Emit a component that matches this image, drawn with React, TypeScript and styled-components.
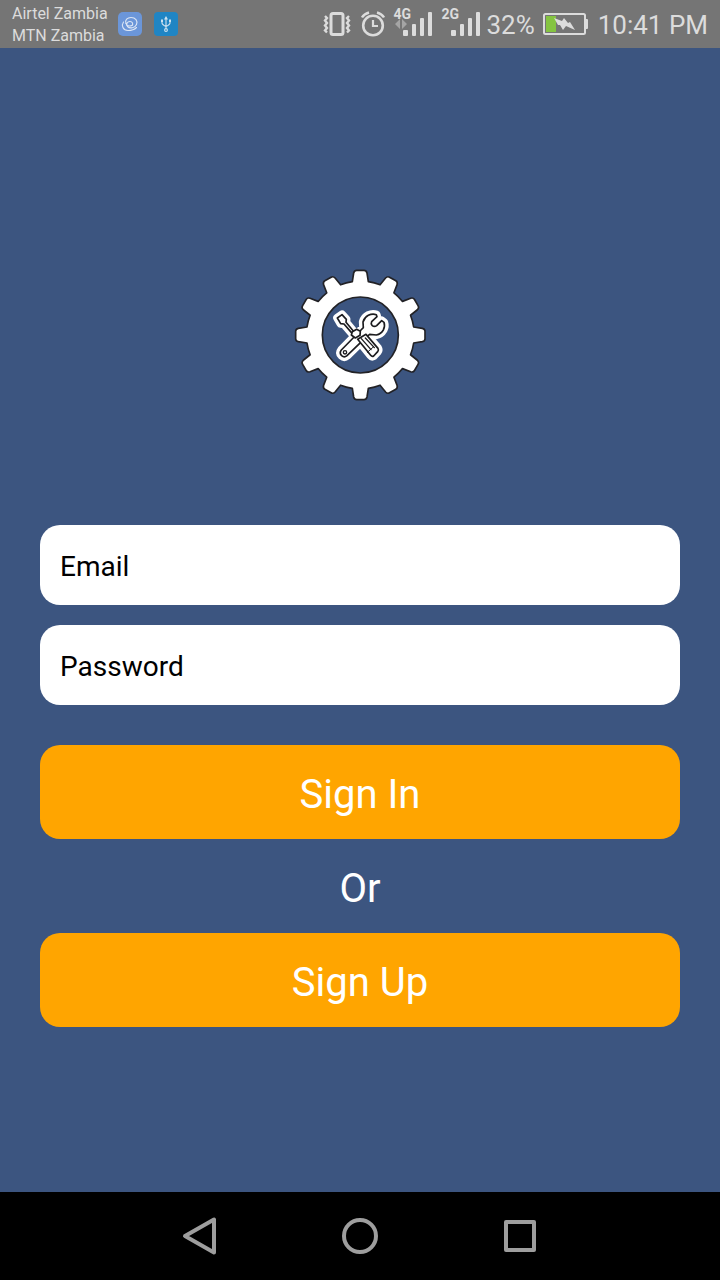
import React from "react";
import styled, { createGlobalStyle } from "styled-components";

const GlobalStyle = createGlobalStyle`
  *, *::before, *::after { box-sizing: border-box; }
  body { margin: 0; background: #3c5580; }
  body, button, input { font-family: Roboto, "Noto Sans", sans-serif; }
`;

const Screen = styled.div`
  display: flex;
  flex-direction: column;
  min-height: 100vh;
  background: #3c5580;
`;

const StatusBar = styled.header`
  display: flex;
  align-items: center;
  justify-content: space-between;
  height: 48px;
  padding: 0 12px;
  background: #757575;
  color: #dcdcdc;
  white-space: nowrap;
`;

const StatusGroup = styled.div<{ $gap: number }>`
  display: flex;
  align-items: center;
  gap: ${(p) => p.$gap}px;
  svg { display: block; flex: none; }
`;

const Carriers = styled.div`
  font-size: 16px;
  line-height: 22px;
  padding-top: 1px;
`;

const StatusText = styled.span`
  font-size: 26px;
  line-height: 32px;
  padding-top: 2px;
`;

const Signal = styled.div`
  position: relative;
  width: 40px;
  height: 32px;
`;

const SignalLabel = styled.span`
  position: absolute;
  top: 0;
  left: 0;
  font-size: 14px;
  font-weight: 700;
  line-height: 12px;
`;

const Main = styled.main`
  flex: 1;
  display: flex;
  flex-direction: column;
  justify-content: center;
  padding: 0 40px;
`;

const LogoArea = styled.div`
  display: flex;
  justify-content: center;
  padding: 47px 0 115px;
  svg { display: block; }
`;

const Form = styled.form`
  display: flex;
  flex-direction: column;
`;

const Fields = styled.div`
  display: flex;
  flex-direction: column;
  gap: 20px;
  margin-bottom: 40px;
`;

const Field = styled.input`
  width: 100%;
  height: 80px;
  padding: 2px 20px 0;
  border: 0;
  border-radius: 20px;
  background: #fff;
  color: #000;
  font-size: 28px;
  &::placeholder { color: #000; opacity: 1; }
`;

const ActionButton = styled.button`
  width: 100%;
  padding: 23px 20px 17px;
  border: 0;
  border-radius: 20px;
  background: #ffa500;
  color: #fff;
  font-size: 40px;
  line-height: 54px;
  cursor: pointer;
`;

const Divider = styled.p`
  margin: 0;
  padding: 23px 0 17px;
  color: #fff;
  font-size: 40px;
  line-height: 54px;
  text-align: center;
`;

const NavBar = styled.nav`
  display: flex;
  align-items: center;
  justify-content: center;
  gap: 112px;
  height: 88px;
  background: #000;
`;

const NavButton = styled.button`
  width: 48px;
  height: 48px;
  padding: 0;
  border: 0;
  background: none;
  cursor: pointer;
  svg { display: block; }
`;

const rotate = (x: number, y: number, deg: number) => {
  const a = (deg * Math.PI) / 180;
  const px = 226 + x * Math.cos(a) - y * Math.sin(a);
  const py = 225 + x * Math.sin(a) + y * Math.cos(a);
  return `${px.toFixed(1)} ${py.toFixed(1)}`;
};

const gearPath =
  Array.from({ length: 12 }, (_, i) => {
    const p = (x: number, y: number) => rotate(x, y, i * 30);
    const start = i === 0 ? `M${p(-24, -160)}` : `A162 162 0 0 1 ${p(-24, -160)}`;
    return `${start}L${p(-20, -186)}Q${p(-18, -194)} ${p(-11, -194)}L${p(11, -194)}Q${p(18, -194)} ${p(20, -186)}L${p(24, -160)}`;
  }).join("") + `A162 162 0 0 1 ${rotate(-24, -160, 0)}Z`;

const wrenchPath =
  "M228 210L235 203L234 186Q238 172 250 166Q262 160 274 164L276 170L260 185Q257 191 261 196Q268 202 275 197L290 182L297 187Q301 199 295 210Q288 222 274 225L254 223L246 229L186 287Q178 294 170 287Q162 279 169 270Z";
const driverTip = "M157 174L171 164L184 178L183 187L208 217L202 221L177 192L167 191Z";
const driverHandle = "M218 238L243 223L279 265Q282 270 278 275L266 288Q261 291 257 286Z";
const driverCollar = "M202 215L215 208L226 214L225 226L211 234L199 225Z";

const Logo = () => (
  <svg width="150" height="150" viewBox="0 0 450 450" role="img" aria-label="Gear with tools">
    <path d={gearPath} fill="#fff" stroke="#222226" strokeWidth="5" strokeLinejoin="round" />
    <circle cx="226" cy="225" r="114" fill="#3c5580" stroke="#222226" strokeWidth="5" />
    <g fill="#fff" stroke="#fff" strokeWidth="25" strokeLinejoin="round">
      <path d={wrenchPath} />
      <path d={driverTip} />
      <path d={driverHandle} />
    </g>
    <g fill="#fff" stroke="#1c1c1f" strokeWidth="5" strokeLinejoin="round" strokeLinecap="round">
      <path d={wrenchPath} />
      <circle cx="180" cy="277" r="5" strokeWidth="4" />
      <path d={driverTip} />
      <path d={driverHandle} />
      <path d={driverCollar} />
      <path d="M229 236L258 269M241 234L268 263" fill="none" strokeWidth="4" />
      <path d="M247 277L266 260" fill="none" strokeWidth="3" />
    </g>
  </svg>
);

const SwirlIcon = () => (
  <svg width="24" height="24" viewBox="0 0 24 24" aria-hidden="true">
    <rect width="24" height="24" rx="5" fill="#6b96d9" />
    <g fill="none" stroke="#dce6f5" strokeWidth="1.1" strokeLinecap="round">
      <path d="M8 11.500C6.500 8 9.500 5.500 13 5.500C17.500 5.500 20 9 18.500 12.500C17 16 12 17 9.500 14.500C7.500 12 9.500 9.500 12 9.500C14.500 9.500 15.500 12 14 13.500" />
      <path d="M5.500 10C3 13.500 5 18.500 10 18.500C13.500 18.500 16.500 17.500 18.500 15.500M8 11.500C8.500 14 11.500 14.500 14 13.500" />
    </g>
  </svg>
);

const UsbIcon = () => (
  <svg width="24" height="24" viewBox="0 0 24 24" aria-hidden="true">
    <rect width="24" height="24" rx="4" fill="#2085c4" />
    <g fill="none" stroke="#cfe2f0" strokeWidth="1.1">
      <path d="M12 6V16.500M8 9V11Q8 12.500 12 14.500Q16 12.500 16 11V9" />
      <circle cx="12" cy="18" r="1.400" />
    </g>
    <path d="M12 4L14 7.500H10ZM7 7.500H9V10H7ZM15 7.500H17V10H15Z" fill="#cfe2f0" />
  </svg>
);

const VibrateIcon = () => (
  <svg width="28" height="26" viewBox="0 0 28 26" fill="none" stroke="#dcdcdc" aria-hidden="true">
    <rect x="8" y="2.500" width="12" height="21" rx="2" strokeWidth="3" />
    <path d="M2 5L4 7L2 9.500L4 12L2 14.500L4 17L2 19.500L4 21.500M26 5L24 7L26 9.500L24 12L26 14.500L24 17L26 19.500L24 21.500" strokeWidth="2.400" />
  </svg>
);

const AlarmIcon = () => (
  <svg width="24" height="26" viewBox="0 0 24 26" fill="none" stroke="#dcdcdc" aria-hidden="true">
    <circle cx="12" cy="14.500" r="9.800" strokeWidth="2.600" />
    <path d="M12 9V15H17" strokeWidth="2.200" />
    <path d="M1 6.500Q3 3 8 1.500M23 6.500Q21 3 16 1.500" strokeWidth="2.400" />
  </svg>
);

const SignalStrength = ({ label, data }: { label: string; data?: boolean }) => (
  <Signal>
    <SignalLabel>{label}</SignalLabel>
    <svg width="40" height="32" viewBox="0 0 40 32" fill="#dcdcdc" aria-hidden="true">
      {data && <path d="M2 16L7 11V21ZM9 11L14 16L9 21Z" fill="#a5a5a5" />}
      <rect x="10" y="22" width="5" height="6" rx="1" />
      <rect x="19" y="16" width="4" height="12" rx="1" />
      <rect x="27" y="10" width="4" height="18" rx="1" />
      <rect x="35" y="4" width="4" height="24" rx="1" />
    </svg>
  </Signal>
);

const BatteryIcon = () => (
  <svg width="45" height="22" viewBox="0 0 45 22" aria-hidden="true">
    <rect x="1" y="1" width="41" height="20" rx="1.500" fill="none" stroke="#dcdcdc" strokeWidth="2" />
    <rect x="42" y="6" width="3" height="10" rx="1" fill="#dcdcdc" />
    <rect x="3" y="3" width="10" height="16" fill="#85c441" />
    <path d="M11 5L19 8L21 5L25 10L27 9L32 17L23 13L20 17L17 12L15 12Z" fill="#dcdcdc" />
  </svg>
);

const navItems = [
  { name: "Back", shape: <path d="M9 24L38 7.500V40.500Z" /> },
  { name: "Home", shape: <circle cx="24" cy="24" r="16" /> },
  { name: "Recent apps", shape: <rect x="10" y="10" width="28" height="28" /> },
];

export default function App() {
  return (
    <Screen>
      <GlobalStyle />
      <StatusBar>
        <StatusGroup $gap={10}>
          <Carriers>
            <div>Airtel Zambia</div>
            <div>MTN Zambia</div>
          </Carriers>
          <StatusGroup $gap={12}>
            <SwirlIcon />
            <UsbIcon />
          </StatusGroup>
        </StatusGroup>
        <StatusGroup $gap={10}>
          <StatusGroup $gap={8}>
            <StatusGroup $gap={10}>
              <VibrateIcon />
              <AlarmIcon />
            </StatusGroup>
            <SignalStrength label="4G" data />
            <StatusGroup $gap={5}>
              <SignalStrength label="2G" />
              <StatusText>32%</StatusText>
            </StatusGroup>
            <BatteryIcon />
          </StatusGroup>
          <StatusText>10:41 PM</StatusText>
        </StatusGroup>
      </StatusBar>
      <Main>
        <LogoArea>
          <Logo />
        </LogoArea>
        <Form onSubmit={(e) => e.preventDefault()}>
          <Fields>
            <Field type="email" placeholder="Email" aria-label="Email" />
            <Field type="password" placeholder="Password" aria-label="Password" />
          </Fields>
          <ActionButton type="submit">Sign In</ActionButton>
          <Divider>Or</Divider>
          <ActionButton type="button">Sign Up</ActionButton>
        </Form>
      </Main>
      <NavBar>
        {navItems.map((item) => (
          <NavButton key={item.name} type="button" aria-label={item.name}>
            <svg width="48" height="48" viewBox="0 0 48 48" fill="none" stroke="#9e9e9e" strokeWidth="4" strokeLinejoin="round" aria-hidden="true">
              {item.shape}
            </svg>
          </NavButton>
        ))}
      </NavBar>
    </Screen>
  );
}
